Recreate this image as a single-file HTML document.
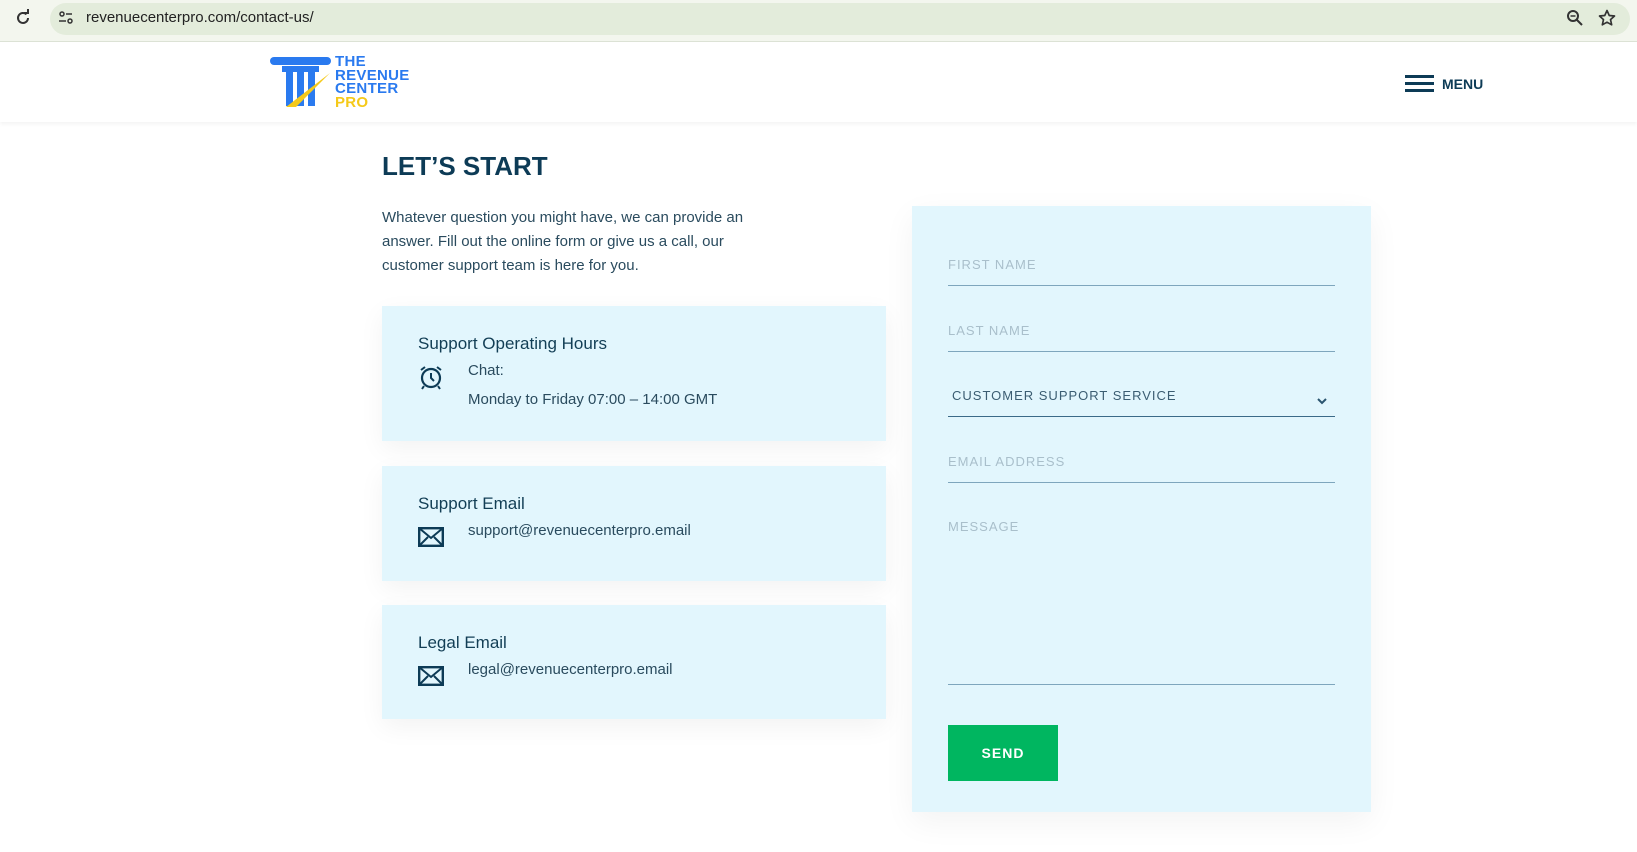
<!DOCTYPE html>
<html><head><meta charset="utf-8">
<style>
*{margin:0;padding:0;box-sizing:border-box}
body{width:1637px;height:852px;overflow:hidden;background:#fff;font-family:"Liberation Sans",sans-serif;color:#0d3b56;position:relative}
.abs{position:absolute}
.bar{left:0;top:0;width:1637px;height:42px;background:#f3f6ee;border-bottom:1px solid #dde3d6}
.pill{left:50px;top:3px;width:1580px;height:32px;background:#e3ecdb;border-radius:16px}
.url{left:86px;top:9px;font-size:15px;color:#222}
.hdr{top:42px;left:0;width:1637px;height:80px;background:#fff;box-shadow:0 2px 4px rgba(0,0,0,.05)}
.card{left:382px;width:504px;background:#e2f6fd;box-shadow:0 8px 24px rgba(0,0,0,.05)}
.ct{position:absolute;left:36px;font-size:17px;color:#123e55}
.cv{position:absolute;left:86px;font-size:15px;color:#2a4b5e}
.field{position:absolute;left:36px;width:387px;border-bottom:1px solid #7ea6bd;font-size:13px;letter-spacing:1px;color:#a9bfcb}
</style></head><body>
<div class="abs bar"></div>
<div class="abs pill"></div>
<svg class="abs" style="left:14px;top:9px" width="18" height="18" viewBox="0 0 18 18"><path d="M14 9a5 5 0 1 1-1.5-3.6" fill="none" stroke="#333" stroke-width="2"/><path d="M10 4h4V0" fill="none" stroke="#333" stroke-width="2"/></svg>
<svg class="abs" style="left:57px;top:9px" width="18" height="18"><circle cx="5" cy="5" r="2" fill="none" stroke="#333" stroke-width="1.5"/><line x1="9" y1="5" x2="15" y2="5" stroke="#333" stroke-width="1.5"/><line x1="2" y1="12" x2="9" y2="12" stroke="#333" stroke-width="1.5"/><circle cx="13" cy="12" r="2" fill="none" stroke="#333" stroke-width="1.5"/></svg>
<div class="abs url">revenuecenterpro.com/contact-us/</div>
<svg class="abs" style="left:1566px;top:9px" width="18" height="18"><circle cx="7" cy="7" r="5" fill="none" stroke="#333" stroke-width="2"/><line x1="11" y1="11" x2="16" y2="16" stroke="#333" stroke-width="2"/><line x1="4.5" y1="7" x2="9.5" y2="7" stroke="#333" stroke-width="1.5"/></svg>
<svg class="abs" style="left:1597px;top:8px" width="20" height="20" viewBox="0 0 24 24"><path d="M12 3l2.7 6 6.3.6-4.8 4.3 1.4 6.3L12 17l-5.6 3.2 1.4-6.3L3 9.6 9.3 9z" fill="none" stroke="#333" stroke-width="2" stroke-linejoin="round"/></svg>
<div class="abs hdr"></div>
<svg class="abs" style="left:270px;top:56px" width="62" height="54" viewBox="0 0 62 54">
<rect x="0" y="1" width="61" height="8" rx="4" fill="#2a7aef"/>
<rect x="12" y="10" width="37" height="6" fill="#2a7aef"/>
<rect x="16" y="16" width="7" height="34" fill="#2a7aef"/>
<rect x="27" y="16" width="7" height="34" fill="#2a7aef"/>
<rect x="38" y="16" width="7" height="34" fill="#2a7aef"/>
<polygon points="16,51 60,17 26,51" fill="#f5c919"/>
</svg>
<div class="abs" style="left:335px;top:55px;font-weight:bold;font-size:15px;line-height:13.5px;color:#2a7aef;letter-spacing:.3px">THE<br>REVENUE<br>CENTER<br><span style="color:#f5c919">PRO</span></div>
<div class="abs" style="left:1405px;top:75px;width:29px;height:3px;background:#0d3b56;box-shadow:0 7px 0 #0d3b56,0 14px 0 #0d3b56"></div>
<div class="abs" style="left:1442px;top:76px;font-weight:bold;font-size:14px;color:#0d3b56">MENU</div>
<div class="abs" style="left:382px;top:151px;font-size:26px;font-weight:bold;color:#0d3b56">LET’S START</div>
<div class="abs" style="left:382px;top:206px;font-size:15px;line-height:24px;color:#2a4b5e;width:395px">Whatever question you might have, we can provide an answer. Fill out the online form or give us a call, our customer support team is here for you.</div>
<div class="abs card" style="top:306px;height:135px">
<div class="ct" style="top:28px">Support Operating Hours</div>
<svg style="position:absolute;left:36px;top:58px" width="26" height="26" viewBox="0 0 26 26"><circle cx="13" cy="14" r="9" fill="none" stroke="#0d3b56" stroke-width="2.2"/><path d="M13 9v5l3 3" fill="none" stroke="#0d3b56" stroke-width="2"/><path d="M3 6l4-3M23 6l-4-3M6 22l-2 3M20 22l2 3" stroke="#0d3b56" stroke-width="2"/></svg>
<div class="cv" style="top:56px">Chat:</div>
<div class="cv" style="top:85px">Monday to Friday 07:00 – 14:00 GMT</div>
</div>
<div class="abs card" style="top:466px;height:115px">
<div class="ct" style="top:28px">Support Email</div>
<svg style="position:absolute;left:36px;top:61px" width="26" height="20" viewBox="0 0 26 20"><rect x="1.2" y="1.2" width="23.6" height="17.6" fill="none" stroke="#0d3b56" stroke-width="2.4"/><path d="M1 1l12 10L25 1M1 19l9-9M25 19l-9-9" fill="none" stroke="#0d3b56" stroke-width="2"/></svg>
<div class="cv" style="top:56px">support@revenuecenterpro.email</div>
</div>
<div class="abs card" style="top:605px;height:114px">
<div class="ct" style="top:28px">Legal Email</div>
<svg style="position:absolute;left:36px;top:61px" width="26" height="20" viewBox="0 0 26 20"><rect x="1.2" y="1.2" width="23.6" height="17.6" fill="none" stroke="#0d3b56" stroke-width="2.4"/><path d="M1 1l12 10L25 1M1 19l9-9M25 19l-9-9" fill="none" stroke="#0d3b56" stroke-width="2"/></svg>
<div class="cv" style="top:56px">legal@revenuecenterpro.email</div>
</div>
<div class="abs" style="left:912px;top:206px;width:459px;height:606px;background:#e2f6fd;box-shadow:0 10px 30px rgba(0,0,0,.05)">
<div class="field" style="top:51px;height:29px">FIRST NAME</div>
<div class="field" style="top:117px;height:29px">LAST NAME</div>
<div class="field" style="top:182px;height:29px;color:#3b5d72;border-bottom:1.5px solid #3b6a88;padding-left:4px">CUSTOMER SUPPORT SERVICE<svg style="position:absolute;right:8px;top:10px" width="10" height="7"><path d="M1 1l4 4 4-4" fill="none" stroke="#2b5570" stroke-width="2"/></svg></div>
<div class="field" style="top:248px;height:29px">EMAIL ADDRESS</div>
<div class="field" style="top:313px;height:166px">MESSAGE</div>
<div style="position:absolute;left:36px;top:519px;width:110px;height:56px;background:#00b660;color:#fff;font-weight:bold;font-size:14px;letter-spacing:1px;text-align:center;line-height:56px">SEND</div>
</div>
</body></html>
